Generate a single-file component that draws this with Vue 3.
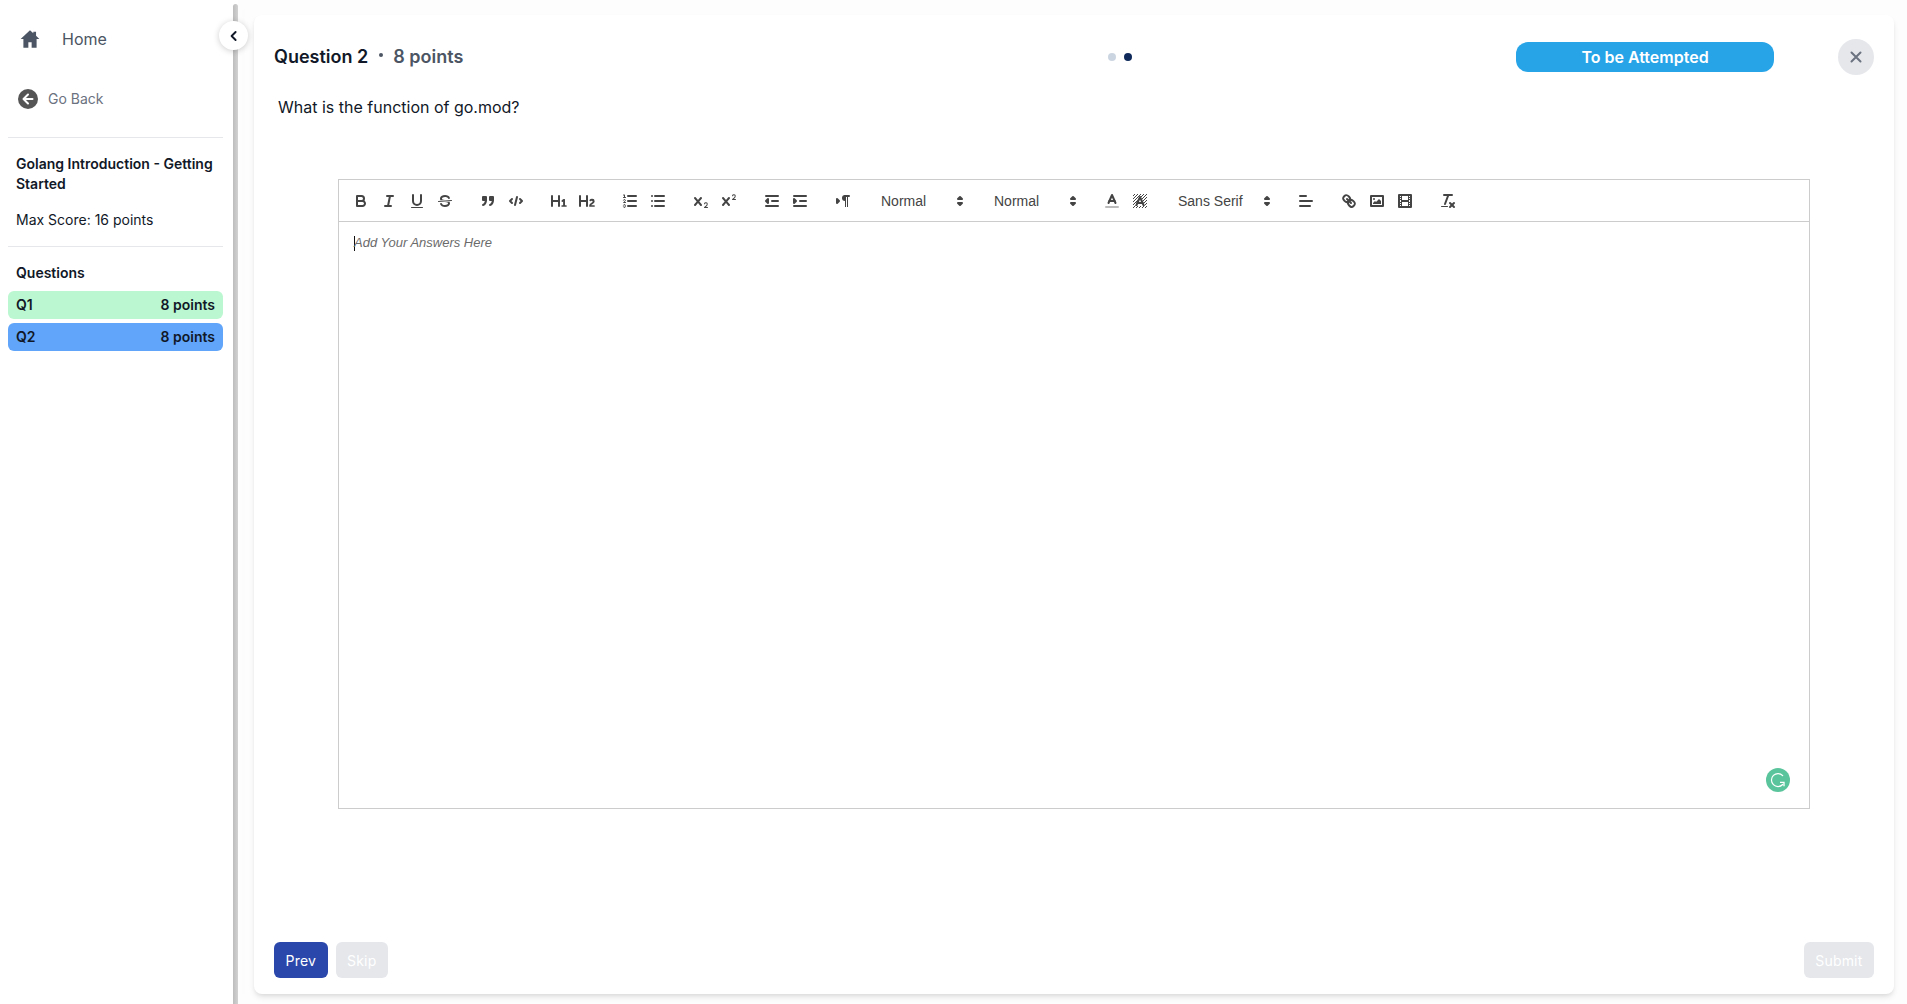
<script setup>
const rows = [
  { id: 'Q1', pts: '8 points', cls: 'done' },
  { id: 'Q2', pts: '8 points', cls: 'current' },
]
</script>

<template>
  <div class="page">
    <aside class="side">
      <a class="home">
        <svg viewBox="0 0 20 20" width="22" height="22"><path fill="#4b5563" d="M10 2 13 4.700V3.500h2.500V7L18.500 10H16v8h-4.500v-5h-3v5H4v-8H1.500z"/></svg>
        <span>Home</span>
      </a>
      <a class="back">
        <svg viewBox="0 0 20 20" width="20" height="20"><circle cx="10" cy="10" r="10" fill="#555"/><path d="M10 5.500 5.500 10l4.500 4.500M6 10h8.500" fill="none" stroke="#fff" stroke-width="2" stroke-linecap="round" stroke-linejoin="round"/></svg>
        <span>Go Back</span>
      </a>
      <hr class="rule first" />
      <div class="title">Golang Introduction - Getting Started</div>
      <div class="score">Max Score: 16 points</div>
      <hr class="rule" />
      <div class="qhead">Questions</div>
      <div v-for="r in rows" :key="r.id" class="qrow" :class="r.cls">
        <span>{{ r.id }}</span><span>{{ r.pts }}</span>
      </div>
    </aside>
    <div class="track"><div class="thumb"></div></div>
    <button class="collapse">
      <svg viewBox="0 0 20 20" width="16" height="16"><path d="M12 5l-5 5 5 5" fill="none" stroke="#111827" stroke-width="2.400" stroke-linecap="round" stroke-linejoin="round"/></svg>
    </button>

    <main class="stage">
      <section class="card">
        <header class="head">
          <div class="htitle">
            <span class="qname">Question 2</span>
            <span class="sep"></span>
            <span class="qpts">8 points</span>
          </div>
          <div class="dots"><i class="dot"></i><i class="dot on"></i></div>
          <div class="status">To be Attempted</div>
          <button class="close">
            <svg viewBox="0 0 20 20" width="20" height="20"><path d="M5.500 5.500l9 9m0-9l-9 9" stroke="#6b7280" stroke-width="2" stroke-linecap="round"/></svg>
          </button>
        </header>
        <p class="prompt">What is the function of go.mod?</p>

        <div class="editor">
          <div class="toolbar">
            <span class="fmt">
              <svg class="b" viewBox="0 0 18 18"><path class="st" d="M5,4H9.500A2.500,2.500,0,0,1,12,6.500v0A2.500,2.500,0,0,1,9.500,9H5A0,0,0,0,1,5,9V4A0,0,0,0,1,5,4Z"/><path class="st" d="M5,9h5.500A2.500,2.500,0,0,1,13,11.500v0A2.500,2.500,0,0,1,10.500,14H5a0,0,0,0,1,0,0V9A0,0,0,0,1,5,9Z"/></svg>
              <svg class="b" viewBox="0 0 18 18"><line class="st" x1="7" x2="13" y1="4" y2="4"/><line class="st" x1="5" x2="11" y1="14" y2="14"/><line class="st" x1="8" x2="10" y1="14" y2="4"/></svg>
              <svg class="b" viewBox="0 0 18 18"><path class="st" d="M5,3V9a4.012,4.012,0,0,0,4,4H9a4.012,4.012,0,0,0,4-4V3"/><rect class="fl" height="1" rx=".5" ry=".5" width="12" x="3" y="15"/></svg>
              <svg class="b" viewBox="0 0 18 18"><line class="st thin" x1="15.500" x2="2.500" y1="8.500" y2="9.500"/><path class="fl" d="M9.007,8C6.542,7.791,6,7.519,6,6.500,6,5.792,7.283,5,9,5c1.571,0,2.765.679,2.969,1.309a1,1,0,0,0,1.900-.617C13.356,4.106,11.354,3,9,3,6.200,3,4,4.538,4,6.500a3.200,3.200,0,0,0,.5,1.843Z"/><path class="fl" d="M8.984,10C11.457,10.208,12,10.479,12,11.500c0,.708-1.283,1.500-3,1.500-1.571,0-2.765-.679-2.969-1.309a1,1,0,1,0-1.900.617C4.644,13.894,6.646,15,9,15c2.800,0,5-1.538,5-3.500a3.200,3.200,0,0,0-.5-1.843Z"/></svg>
            </span>
            <span class="fmt">
              <svg class="b" viewBox="0 0 18 18"><rect class="fl st" height="3" width="3" x="4" y="5"/><rect class="fl st" height="3" width="3" x="11" y="5"/><path class="fl st" d="M7,8c0,4.031-3,5-3,5"/><path class="fl st" d="M14,8c0,4.031-3,5-3,5"/></svg>
              <svg class="b" viewBox="0 0 18 18"><polyline class="st" points="5 7 3 9 5 11"/><polyline class="st" points="13 7 15 9 13 11"/><line class="st" x1="10" x2="8" y1="5" y2="13"/></svg>
            </span>
            <span class="fmt">
              <svg class="b" viewBox="0 0 18 18"><path class="fl" d="M10,4V14a1,1,0,0,1-2,0V10H3v4a1,1,0,0,1-2,0V4A1,1,0,0,1,3,4V8H8V4a1,1,0,0,1,2,0Zm6.068,9.209H14.990V7.599a.541.541,0,0,0-.605-.605h-.627a1.011,1.011,0,0,0-.748.297L11.645,8.566a.544.544,0,0,0-.022.858l.286.308a.539.539,0,0,0,.847.033l.099-.088a1.214,1.214,0,0,0,.242-.353h.022s-.011.309-.011.605V13.209H12.041a.541.541,0,0,0-.605.605v.440a.541.541,0,0,0,.605.605h4.027a.541.541,0,0,0,.605-.605v-.440A.541.541,0,0,0,16.068,13.209Z"/></svg>
              <svg class="b" viewBox="0 0 18 18"><path class="fl" d="M16.740,13.814v.440a.541.541,0,0,1-.605.605H11.855a.584.584,0,0,1-.649-.605V14.013c0-2.905,3.399-3.422,3.399-4.555a.777.777,0,0,0-.847-.781,1.177,1.177,0,0,0-.836.385c-.275.264-.561.374-.858.132l-.429-.341c-.308-.242-.385-.518-.154-.814a2.972,2.972,0,0,1,2.454-1.177,2.454,2.454,0,0,1,2.684,2.409c0,2.453-3.179,2.927-3.278,3.938h2.794A.541.541,0,0,1,16.740,13.814ZM9,3A1,1,0,0,0,8,4V8H3V4A1,1,0,0,0,1,4V14a1,1,0,0,0,2,0V10H8v4a1,1,0,0,0,2,0V4A1,1,0,0,0,9,3Z"/></svg>
            </span>
            <span class="fmt">
              <svg class="b" viewBox="0 0 18 18"><line class="st" x1="7" x2="15" y1="4" y2="4"/><line class="st" x1="7" x2="15" y1="9" y2="9"/><line class="st" x1="7" x2="15" y1="14" y2="14"/><line class="st thin" x1="2.500" x2="4.500" y1="5.500" y2="5.500"/><path class="fl" d="M3.500,6A.5.5,0,0,1,3,5.500V3.500H2.500a.5.5,0,0,1,0-1H3.500a.5.5,0,0,1,.5.5V5.500A.5.5,0,0,1,3.500,6Z"/><path class="st thin" d="M4.500,10.500h-2c0-.234,1.850-1.076,1.850-2.234A.959.959,0,0,0,2.500,8.156"/><path class="st thin" d="M2.500,14.846a.959.959,0,0,0,1.850-.109A.7.7,0,0,0,3.750,14a.688.688,0,0,0,.6-.736,.959.959,0,0,0-1.850-.109"/></svg>
              <svg class="b" viewBox="0 0 18 18"><line class="st" x1="6" x2="15" y1="4" y2="4"/><line class="st" x1="6" x2="15" y1="9" y2="9"/><line class="st" x1="6" x2="15" y1="14" y2="14"/><line class="st" x1="3" x2="3" y1="4" y2="4"/><line class="st" x1="3" x2="3" y1="9" y2="9"/><line class="st" x1="3" x2="3" y1="14" y2="14"/></svg>
            </span>
            <span class="fmt">
              <svg class="b" viewBox="0 0 18 18"><path class="fl" d="M15.500,15H13.861a3.858,3.858,0,0,0,1.914-2.975,1.800,1.800,0,0,0-1.600-1.751A1.921,1.921,0,0,0,12.021,11.700a.5,.5,0,1,0,.957.291h0a.914,.914,0,0,1,1.053-.725,.81,.81,0,0,1,.744.762c0,1.076-1.170,1.870-1.940,2.431A1.456,1.456,0,0,0,12,15.500a.5,.5,0,0,0,.5.5h3A.5,.5,0,0,0,15.500,15Z"/><path class="fl" d="M9.650,5.241a1,1,0,0,0-1.409.108L6,7.964,3.759,5.349A1,1,0,0,0,2.192,6.592Q2.215,6.621,2.241,6.649L4.684,9.500,2.241,12.350A1,1,0,0,0,3.710,13.707q.026-.028.049-.057L6,11.036,8.241,13.650a1,1,0,1,0,1.567-1.243Q9.785,12.378,9.759,12.350L7.316,9.500,9.759,6.651A1,1,0,0,0,9.650,5.241Z"/></svg>
              <svg class="b" viewBox="0 0 18 18"><path class="fl" d="M15.500,7H13.861a4.015,4.015,0,0,0,1.914-2.975,1.800,1.800,0,0,0-1.600-1.751A1.922,1.922,0,0,0,12.021,3.700a.5,.5,0,1,0,.957.291,.917,.917,0,0,1,1.053-.725,.81,.81,0,0,1,.744.762c0,1.077-1.164,1.925-1.934,2.486A1.423,1.423,0,0,0,12,7.500a.5,.5,0,0,0,.5.5h3A.5,.5,0,0,0,15.500,7Z"/><path class="fl" d="M9.651,5.241a1,1,0,0,0-1.410.108L6,7.964,3.759,5.349a1,1,0,1,0-1.519,1.300L4.683,9.500,2.241,12.350a1,1,0,1,0,1.519,1.300L6,11.036l2.241,2.616a1,1,0,0,0,1.519-1.300L7.317,9.500,9.759,6.651A1,1,0,0,0,9.651,5.241Z"/></svg>
            </span>
            <span class="fmt">
              <svg class="b" viewBox="0 0 18 18"><line class="st" x1="3" x2="15" y1="14" y2="14"/><line class="st" x1="3" x2="15" y1="4" y2="4"/><line class="st" x1="9" x2="15" y1="9" y2="9"/><polyline class="fl st" points="5 7 5 11 3 9 5 7"/></svg>
              <svg class="b" viewBox="0 0 18 18"><line class="st" x1="3" x2="15" y1="14" y2="14"/><line class="st" x1="3" x2="15" y1="4" y2="4"/><line class="st" x1="9" x2="15" y1="9" y2="9"/><polyline class="fl st" points="3 7 3 11 5 9 3 7"/></svg>
            </span>
            <span class="fmt">
              <svg class="b" viewBox="0 0 18 18"><polygon class="fl st" points="3 11 5 9 3 7 3 11"/><line class="st" x1="15" x2="11" y1="4" y2="4"/><path class="fl" d="M11,3a3,3,0,0,0,0,6h1V3H11Z"/><rect class="fl" height="11" width="1" x="11" y="4"/><rect class="fl" height="11" width="1" x="13" y="4"/></svg>
            </span>
            <span class="fmt">
              <span class="picker">Normal<svg viewBox="0 0 18 18"><polygon class="fl st" points="7 11 9 13 11 11 7 11"/><polygon class="fl st" points="7 7 9 5 11 7 7 7"/></svg></span>
            </span>
            <span class="fmt">
              <span class="picker">Normal<svg viewBox="0 0 18 18"><polygon class="fl st" points="7 11 9 13 11 11 7 11"/><polygon class="fl st" points="7 7 9 5 11 7 7 7"/></svg></span>
            </span>
            <span class="fmt">
              <svg class="b" viewBox="0 0 18 18"><line class="st under" x1="3" x2="15" y1="15" y2="15"/><polyline class="st" points="5.500 11 9 3 12.500 11"/><line class="st" x1="11.630" x2="6.380" y1="9" y2="9"/></svg>
              <svg class="b" viewBox="0 0 18 18"><defs><pattern id="hatch" width="3" height="3" x="0" y="0" patternUnits="userSpaceOnUse"><rect x="2" y="0" width="1" height="1" fill="#444"/><rect x="1" y="1" width="1" height="1" fill="#444"/><rect x="0" y="2" width="1" height="1" fill="#444"/></pattern></defs><rect x="2" y="2" width="14" height="14" fill="url(#hatch)"/><polygon points="9 3.500 13.500 14 4.500 14" fill="#fff"/><polyline class="st" points="5.500 13 9 5 12.500 13"/><line class="st" x1="11.630" x2="6.380" y1="11" y2="11"/></svg>
            </span>
            <span class="fmt">
              <span class="picker font">Sans Serif<svg viewBox="0 0 18 18"><polygon class="fl st" points="7 11 9 13 11 11 7 11"/><polygon class="fl st" points="7 7 9 5 11 7 7 7"/></svg></span>
            </span>
            <span class="fmt">
              <svg class="b" viewBox="0 0 18 18"><line class="st" x1="3" x2="15" y1="9" y2="9"/><line class="st" x1="3" x2="13" y1="14" y2="14"/><line class="st" x1="3" x2="9" y1="4" y2="4"/></svg>
            </span>
            <span class="fmt">
              <svg class="b" viewBox="0 0 18 18"><line class="st" x1="7" x2="11" y1="7" y2="11"/><path class="st" d="M8.900,4.577a3.476,3.476,0,0,1,.36,4.679A3.476,3.476,0,0,1,4.577,8.900C3.185,7.500,2.035,6.400,4.217,4.217S7.500,3.185,8.900,4.577Z"/><path class="st" d="M13.423,9.100a3.476,3.476,0,0,0-4.679-.36,3.476,3.476,0,0,0,.36,4.679c1.392,1.392,2.500,2.542,4.679.36S14.815,10.500,13.423,9.100Z"/></svg>
              <svg class="b" viewBox="0 0 18 18"><rect class="st" height="10" width="12" x="3" y="4"/><circle class="fl" cx="6" cy="7" r="1"/><polyline class="fl" points="5 12 5 11 7 9 8 10 11 7 13 9 13 12 5 12"/></svg>
              <svg class="b" viewBox="0 0 18 18"><rect class="st" height="12" width="12" x="3" y="3"/><rect class="fl" height="12" width="1" x="5" y="3"/><rect class="fl" height="12" width="1" x="12" y="3"/><rect class="fl" height="2" width="8" x="5" y="8"/><rect class="fl" height="1" width="3" x="3" y="5"/><rect class="fl" height="1" width="3" x="3" y="7"/><rect class="fl" height="1" width="3" x="3" y="10"/><rect class="fl" height="1" width="3" x="3" y="12"/><rect class="fl" height="1" width="3" x="12" y="5"/><rect class="fl" height="1" width="3" x="12" y="7"/><rect class="fl" height="1" width="3" x="12" y="10"/><rect class="fl" height="1" width="3" x="12" y="12"/></svg>
            </span>
            <span class="fmt">
              <svg class="b" viewBox="0 0 18 18"><line class="st" x1="5" x2="13" y1="3" y2="3"/><line class="st" x1="6" x2="9.350" y1="12" y2="3"/><line class="st" x1="11" x2="15" y1="11" y2="15"/><line class="st" x1="15" x2="11" y1="11" y2="15"/><rect class="fl" height="1" rx=".5" ry=".5" width="7" x="2" y="14"/></svg>
            </span>
          </div>
          <div class="body">
            <div class="line"><span class="caret"></span><em>Add Your Answers Here</em></div>
            <span class="grammarly">
              <svg viewBox="0 0 24 24" width="24" height="24"><circle cx="12" cy="12" r="12" fill="#5ac59c"/><path d="M16.700 7.600A6.500 6.500 0 1 0 16.700 16.500" fill="none" stroke="#fff" stroke-width="1.200" stroke-linecap="round"/><path d="M14 14.300h4v4" fill="none" stroke="#fff" stroke-width="1.300"/></svg>
            </span>
          </div>
        </div>

        <footer class="foot">
          <button class="btn prev">Prev</button>
          <button class="btn off">Skip</button>
          <button class="btn off submit">Submit</button>
        </footer>
      </section>
    </main>
  </div>
</template>

<style>
html, body { margin: 0; background: #fff; }
</style>

<style scoped>
.page {
  position: relative;
  display: flex;
  height: 1004px;
  overflow: hidden;
  font-family: Inter, "Liberation Sans", sans-serif;
  color: #111827;
}
.side { width: 233px; flex: none; padding: 0 10px 0 8px; box-sizing: border-box; background: #fff; }
.home { display: flex; align-items: center; height: 24px; margin-top: 27px; padding-left: 11px; color: #4b5563; font-size: 16px; }
.home span { margin-left: 21px; }
.back { display: flex; align-items: center; height: 20px; margin-top: 38px; padding-left: 10px; color: #6b7280; font-size: 14px; }
.back span { margin-left: 10px; margin-bottom: 2px; }
.rule { border: 0; border-top: 1px solid #e5e7eb; margin: 0; }
.rule.first { margin-top: 28px; }
.title { margin-top: 16px; padding-left: 8px; font-size: 14px; line-height: 20px; font-weight: 600; color: #111827; }
.score { margin-top: 16px; padding-left: 8px; font-size: 14px; line-height: 20px; margin-bottom: 16px; }
.qhead { margin-top: 16px; padding-left: 8px; font-size: 14px; line-height: 20px; font-weight: 600; margin-bottom: 8px; }
.qrow { display: flex; justify-content: space-between; align-items: center; height: 28px; padding: 0 8px 2px; box-sizing: border-box; margin-bottom: 4px; border-radius: 6px; font-size: 14px; font-weight: 600; }
.done { background: #bbf7d0; }
.current { background: #60a5fa; }
.track { width: 5px; flex: none; position: relative; background: #fff; box-shadow: 8px 0 8px -2px rgba(0,0,0,.045); z-index: 1; }
.thumb { position: absolute; left: 0; right: 0; top: 4px; bottom: 0; background: linear-gradient(90deg, #bdbdbd, #d2d2d2); border-radius: 3px 3px 0 0; }
.collapse {
  position: absolute; left: 219px; top: 21px; width: 29px; height: 29px; padding: 0;
  display: flex; align-items: center; justify-content: center;
  border: 0; border-radius: 50%; background: #fff; box-shadow: 0 1px 6px rgba(0,0,0,.2); z-index: 2;
}
.stage { flex: 1; min-width: 0; background: #fdfdfd; padding: 15px 13px 10px 16px; box-sizing: border-box; }
.card { height: 100%; box-sizing: border-box; background: #fff; border-radius: 8px; box-shadow: 0 4px 6px -1px rgba(0,0,0,.1), 0 2px 4px -1px rgba(0,0,0,.06); padding: 24px 20px 16px; display: flex; flex-direction: column; }
.head { display: flex; align-items: center; height: 36px; }
.htitle { width: 834px; flex: none; display: flex; align-items: center; font-size: 18px; font-weight: 600; margin-bottom: 2px; }
.sep { width: 4px; height: 4px; border-radius: 50%; background: #4b5563; margin: 0 10px 0 11px; position: relative; top: -1px; }
.qpts { color: #4b5563; font-weight: 600; }
.dots { display: flex; gap: 8px; width: 408px; flex: none; }
.dot { width: 8px; height: 8px; border-radius: 50%; background: #cbd5e1; }
.dot.on { background: #0f2a5a; }
.status { width: 258px; height: 30px; flex: none; border-radius: 12px; background: #27a4e8; color: #fff; font-size: 16px; font-weight: 600; display: flex; align-items: center; justify-content: center; }
.close { margin-left: auto; width: 36px; height: 36px; border: 0; padding: 0; border-radius: 50%; background: #e5e7eb; display: flex; align-items: center; justify-content: center; }
.prompt { margin: 20px 0 0 4px; font-size: 16px; line-height: 24px; color: #111827; }
.editor { margin: 60px 64px 0; flex: none; }
.toolbar { display: flex; align-items: center; box-sizing: border-box; border: 1px solid #ccc; padding: 8px; height: 43px; }
.fmt { display: flex; margin-right: 15px; }
.b { width: 18px; height: 18px; padding: 3px 5px; box-sizing: content-box; display: block; }
.st { fill: none; stroke: #444; stroke-width: 2; stroke-linecap: round; stroke-linejoin: round; }
.st.thin { stroke-width: 1; }
.st.under { stroke: #bbb; }
.fl { fill: #444; }
.st.fl { fill: #444; }
.picker { width: 98px; height: 24px; box-sizing: border-box; padding: 0 0 0 9px; display: flex; align-items: center; justify-content: space-between; font: 14px "Liberation Sans", Arial, sans-serif; color: #444; }
.picker.font { width: 108px; }
.picker svg { width: 18px; height: 18px; flex: none; margin-right: 1px; }
.body { position: relative; height: 587px; border: 1px solid #ccc; border-top: 0; padding: 12px 15px; box-sizing: border-box; font: 13px/1.420 "Liberation Sans", Arial, sans-serif; color: #6b6b6b; }
.line { display: flex; align-items: center; }
.caret { width: 1px; height: 15px; background: #111; margin-right: -1px; }
.grammarly { position: absolute; right: 19px; bottom: 16px; display: flex; }
.foot { margin-top: auto; display: flex; gap: 8px; }
.btn { height: 36px; border: 0; border-radius: 6px; padding: 0 11.500px; font: 400 14px Inter, sans-serif; letter-spacing: .2px; color: #fff; }
.prev { background: #2a47ab; }
.off { background: #e5e7eb; }
.submit { margin-left: auto; }
</style>
